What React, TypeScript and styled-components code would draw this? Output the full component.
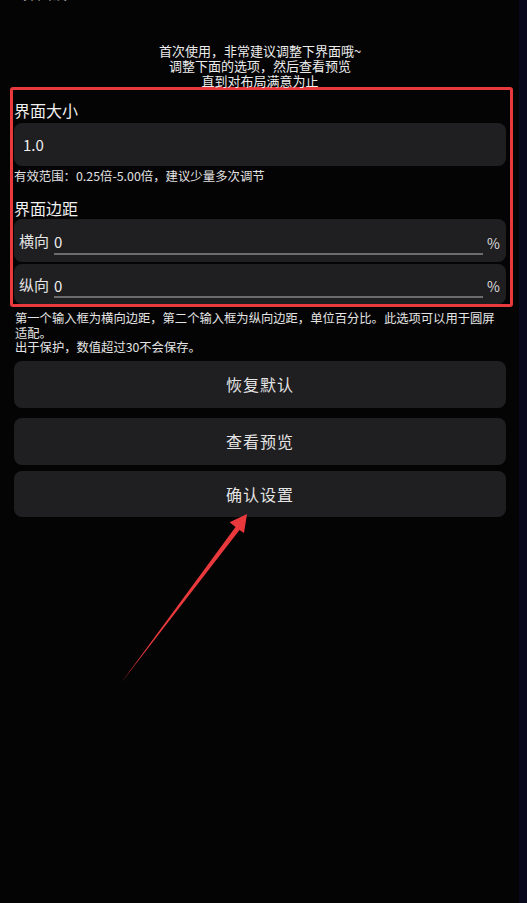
import React, { useState } from 'react'
import styled, { createGlobalStyle } from 'styled-components'

const Global = createGlobalStyle`
    html, body {
        margin: 0;
        padding: 0;
        background: #050405;
    }
    * {
        box-sizing: border-box;
    }
`

const font = `"Noto Sans CJK SC", "Noto Sans", sans-serif`

const Page = styled.div`
    position: relative;
    width: 527px;
    min-height: 903px;
    background: #050405;
    border-right: 8px solid #09091d;
    padding: 0 13px 0 14px;
    font-family: ${font};
    color: #e8e8e8;
    overflow: hidden;
`
const Titlebar = styled.div`
    height: 3px;
    overflow: hidden;
    display: flex;
    align-items: flex-end;
    padding-left: 8px;
`
const Title = styled.div`
    font-size: 15px;
    line-height: 20px;
    color: #b8b8b8;
    white-space: nowrap;
`
const Intro = styled.div`
    margin-top: 40px;
    text-align: center;
    font-size: 13px;
    line-height: 15px;
    color: #ececec;
`
const Redbox = styled.div`
    margin: -1px -7px 0 -4px;
    border: 3px solid #e8393d;
    border-radius: 3px;
    padding: 9px 4px 0 1px;
`
const Label = styled.div`
    font-size: 16px;
    line-height: 22px;
    color: #f0f0f0;
    margin-top: ${(p: { $top?: number }) => p.$top || 0}px;
`
const Sizeinput = styled.input`
    display: block;
    width: 100%;
    height: 43px;
    margin-top: 2px;
    border: none;
    outline: none;
    border-radius: 8px;
    background: #1f1e21;
    color: #eeeeee;
    font-family: ${font};
    font-size: 15px;
    padding: 0 0 0 9px;
`
const Hint = styled.div`
    margin-top: 2px;
    font-size: 12.4px;
    line-height: 16px;
    color: #e2e2e2;
`
const Row = styled.div<{ $h: number; $top: number }>`
    display: flex;
    align-items: center;
    height: ${(p) => p.$h}px;
    margin-top: ${(p) => p.$top}px;
    border-radius: 8px;
    background: #1f1e21;
    padding: 0 6px 0 5px;
`
const Rowlabel = styled.span`
    font-size: 15px;
    width: 35px;
    color: #e6e6e6;
    flex-shrink: 0;
`
const Field = styled.input`
    flex: 1;
    min-width: 0;
    height: 24px;
    margin-top: 4px;
    border: none;
    border-bottom: 2px solid #6c6c6c;
    outline: none;
    background: transparent;
    color: #eeeeee;
    font-family: ${font};
    font-size: 15px;
    padding: 0;
`
const Unit = styled.span`
    font-size: 14px;
    color: #dddddd;
    margin-left: 4px;
    margin-top: 4px;
`
const Notes = styled.div`
    margin-top: 4px;
    padding: 0 4px 0 1px;
    font-size: 12.3px;
    line-height: 14.5px;
    color: #e4e4e4;
`
const Button = styled.button<{ $h: number; $top: number }>`
    display: block;
    width: 100%;
    height: ${(p) => p.$h}px;
    margin-top: ${(p) => p.$top}px;
    border: none;
    border-radius: 8px;
    background: #1f1e21;
    color: #e4e4e4;
    font-family: ${font};
    font-size: 16px;
    letter-spacing: 1px;
    cursor: pointer;
`
const Overlay = styled.svg`
    position: absolute;
    top: 0;
    left: 0;
    pointer-events: none;
`

const App: React.FC = () => {
    const [scale, setScale] = useState('1.0')
    const [horiz, setHoriz] = useState('0')
    const [vert, setVert] = useState('0')

    return (
        <Page>
            <Global />
            <Titlebar><Title>界面设置</Title></Titlebar>
            <Intro>
                首次使用，非常建议调整下界面哦~<br />
                调整下面的选项，然后查看预览<br />
                直到对布局满意为止
            </Intro>
            <Redbox>
                <Label>界面大小</Label>
                <Sizeinput value={scale} onChange={(e) => setScale(e.target.value)} />
                <Hint>有效范围：0.25倍-5.00倍，建议少量多次调节</Hint>
                <Label $top={13}>界面边距</Label>
                <Row $h={43} $top={0}>
                    <Rowlabel>横向</Rowlabel>
                    <Field value={horiz} onChange={(e) => setHoriz(e.target.value)} />
                    <Unit>%</Unit>
                </Row>
                <Row $h={40} $top={2}>
                    <Rowlabel>纵向</Rowlabel>
                    <Field value={vert} onChange={(e) => setVert(e.target.value)} />
                    <Unit>%</Unit>
                </Row>
            </Redbox>
            <Notes>
                第一个输入框为横向边距，第二个输入框为纵向边距，单位百分比。此选项可以用于圆屏适配。<br />
                出于保护，数值超过30不会保存。
            </Notes>
            <Button $h={47} $top={6}>恢复默认</Button>
            <Button $h={47} $top={10}>查看预览</Button>
            <Button $h={46} $top={6}>确认设置</Button>
            <Overlay width="527" height="903" viewBox="0 0 527 903">
                <polygon
                    points="121,683 235.5,527 229.6,522.2 247,514 244,533 239.5,530"
                    fill="#e9393d"
                />
            </Overlay>
        </Page>
    )
}

export default App
